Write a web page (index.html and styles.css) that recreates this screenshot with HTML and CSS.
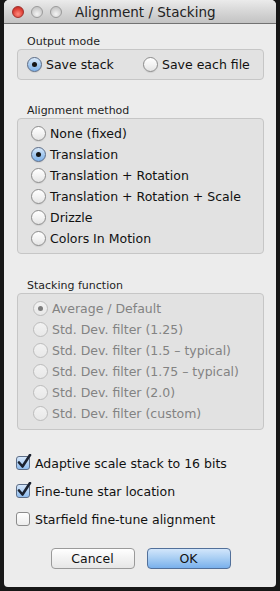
FILE: index.html
```html
<!DOCTYPE html>
<html lang="en">
<head>
    <meta charset="UTF-8">
    <title>Alignment / Stacking</title>
    <link rel="stylesheet" href="styles.css">
</head>
<body>
    <div class="window">
        <div class="titlebar">
            <span class="light red"></span>
            <span class="light"></span>
            <span class="light"></span>
            <span class="title">Alignment / Stacking</span>
        </div>

        <div class="content">
            <div class="group-label first">Output mode</div>
            <div class="group-box mode-box">
                <label class="radio-item"><span class="radio on"></span>Save stack</label>
                <label class="radio-item second"><span class="radio"></span>Save each file</label>
            </div>

            <div class="group-label">Alignment method</div>
            <div class="group-box list-box">
                <label class="radio-item"><span class="radio"></span>None (fixed)</label>
                <label class="radio-item"><span class="radio on"></span>Translation</label>
                <label class="radio-item"><span class="radio"></span>Translation + Rotation</label>
                <label class="radio-item"><span class="radio"></span>Translation + Rotation + Scale</label>
                <label class="radio-item"><span class="radio"></span>Drizzle</label>
                <label class="radio-item"><span class="radio"></span>Colors In Motion</label>
            </div>

            <div class="group-label stack-label">Stacking function</div>
            <div class="group-box list-box disabled">
                <label class="radio-item"><span class="radio on"></span>Average / Default</label>
                <label class="radio-item"><span class="radio"></span>Std. Dev. filter (1.25)</label>
                <label class="radio-item"><span class="radio"></span>Std. Dev. filter (1.5 – typical)</label>
                <label class="radio-item"><span class="radio"></span>Std. Dev. filter (1.75 – typical)</label>
                <label class="radio-item"><span class="radio"></span>Std. Dev. filter (2.0)</label>
                <label class="radio-item"><span class="radio"></span>Std. Dev. filter (custom)</label>
            </div>

            <div class="checks">
                <label class="check-item"><span class="check on"><svg viewBox="0 0 16 16" width="16" height="16"><path d="M3 8.5 L6.5 12.5 L14 1" fill="none" stroke="#1b2230" stroke-width="2.6" stroke-linecap="round" stroke-linejoin="round"/></svg></span>Adaptive scale stack to 16 bits</label>
                <label class="check-item"><span class="check on"><svg viewBox="0 0 16 16" width="16" height="16"><path d="M3 8.5 L6.5 12.5 L14 1" fill="none" stroke="#1b2230" stroke-width="2.6" stroke-linecap="round" stroke-linejoin="round"/></svg></span>Fine-tune star location</label>
                <label class="check-item"><span class="check"></span>Starfield fine-tune alignment</label>
            </div>

            <div class="buttons">
                <button class="btn">Cancel</button>
                <button class="btn default">OK</button>
            </div>
        </div>
    </div>
</body>
</html>
```

FILE: styles.css
```css
body {
    margin: 0;
    background-color: #171717;
    font-family: "DejaVu Sans", "Liberation Sans", sans-serif;
    color: #111;
}

.window {
    width: 272px;
    height: 587px;
    margin-left: 4px;
    background-color: #ececec;
    border-radius: 5px 5px 4px 4px;
    overflow: hidden;
}

.titlebar {
    height: 23px;
    border-bottom: 1px solid #727272;
    background: linear-gradient(#ebebeb, #d6d6d6 50%, #c3c3c3);
    display: flex;
    align-items: center;
    padding-left: 8px;
}

.light {
    width: 12px;
    height: 12px;
    border-radius: 50%;
    margin-right: 7px;
    box-sizing: border-box;
    border: 1px solid #9a9a9a;
    background: radial-gradient(circle at 50% 70%, #f4f4f4, #c9c9c9 70%);
}

.light.red {
    border-color: #a0302b;
    background: radial-gradient(circle at 50% 70%, #ff8b7e, #e0443a 55%, #b8231d);
}

.title {
    margin-left: 6px;
    font-size: 13.5px;
    color: #222;
}

.content {
    padding: 11px 12px 0 13px;
}

.group-label {
    font-size: 11px;
    line-height: 14px;
    padding-left: 10px;
    color: #1e1e1e;
    margin-top: 24px;
}

.group-label.first {
    margin-top: 0;
}

.group-label.stack-label {
    margin-top: 25px;
}

.group-box {
    background-color: #e2e2e2;
    border: 1px solid #c6c6c6;
    border-radius: 4px;
    box-sizing: border-box;
    width: 247px;
}

.mode-box {
    height: 31px;
    display: flex;
    align-items: center;
    padding-left: 9px;
}

.mode-box .radio-item {
    width: 116px;
}

.list-box {
    padding: 4px 0 4px 13px;
}

.list-box.disabled {
    padding: 4px 0 5px 15px;
}

.radio-item {
    display: flex;
    align-items: center;
    height: 21px;
    font-size: 12.5px;
}

.radio {
    width: 15px;
    height: 15px;
    box-sizing: border-box;
    border-radius: 50%;
    border: 1px solid #8c8c8c;
    background: linear-gradient(#ffffff, #f3f3f3 50%, #e4e4e4);
    margin-right: 4px;
    display: flex;
    align-items: center;
    justify-content: center;
    box-shadow: 0 1px 1px rgba(0, 0, 0, 0.08);
}

.radio.on {
    border-color: #5a6b86;
    background: linear-gradient(#d9e9fa, #a6caef 50%, #7fb2ea);
}

.radio.on::after {
    content: "";
    width: 5px;
    height: 5px;
    border-radius: 50%;
    background-color: #151515;
}

.disabled .radio-item {
    color: #838383;
}

.disabled .radio {
    border-color: #bcbcbc;
    background: linear-gradient(#f2f2f2, #e8e8e8);
    box-shadow: none;
}

.disabled .radio.on::after {
    background-color: #7c7c7c;
}

.checks {
    margin-top: 23px;
    display: flex;
    flex-direction: column;
    gap: 8px;
}

.check-item {
    display: flex;
    align-items: center;
    height: 20px;
    margin-left: -1px;
    font-size: 12.5px;
}

.check {
    position: relative;
    width: 14px;
    height: 14px;
    box-sizing: border-box;
    border: 1px solid #8c8c8c;
    border-radius: 3px;
    background: linear-gradient(#ffffff, #ededed);
    margin-right: 5px;
}

.check.on {
    border-color: #5d6e88;
    background: linear-gradient(#d6e7fa, #8fbdef);
}

.check svg {
    position: absolute;
    left: -1px;
    top: -3px;
}

.buttons {
    display: flex;
    justify-content: center;
    gap: 12px;
    margin-top: 19px;
}

.btn {
    width: 84px;
    height: 21px;
    font-family: "DejaVu Sans", sans-serif;
    font-size: 12.5px;
    color: #111;
    border: 1px solid #9a9a9a;
    border-radius: 4px;
    background: linear-gradient(#ffffff, #f2f2f2 50%, #e6e6e6);
    padding: 0;
}

.btn.default {
    border-color: #52709a;
    background: linear-gradient(#d2e6fb, #a7cdf3 50%, #79b0ec);
}
```
